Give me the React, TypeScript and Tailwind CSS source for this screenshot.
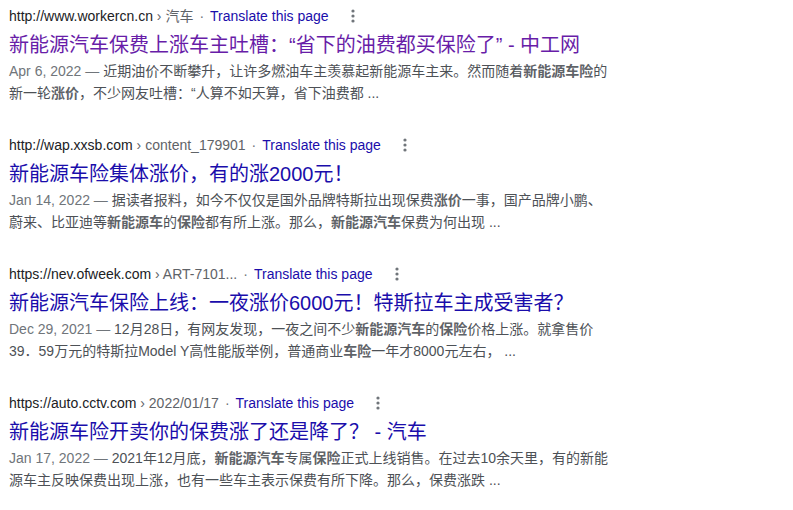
import React from "react";

const FONT = '"Liberation Sans", Arial, "Noto Sans CJK SC", sans-serif';

type Part = string | { b: string };

interface Result {
  url: string;
  crumb: string;
  title: string;
  visited?: boolean;
  date: string;
  lines: Part[][];
}

const results: Result[] = [
  {
    url: "http://www.workercn.cn",
    crumb: "汽车",
    title: "新能源汽车保费上涨车主吐槽：“省下的油费都买保险了” - 中工网",
    visited: true,
    date: "Apr 6, 2022",
    lines: [
      ["近期油价不断攀升，让许多燃油车主羡慕起新能源车主来。然而随着", { b: "新能源车险" }, "的"],
      ["新一轮", { b: "涨价" }, "，不少网友吐槽：“人算不如天算，省下油费都 ..."],
    ],
  },
  {
    url: "http://wap.xxsb.com",
    crumb: "content_179901",
    title: "新能源车险集体涨价，有的涨2000元！",
    date: "Jan 14, 2022",
    lines: [
      ["据读者报料，如今不仅仅是国外品牌特斯拉出现保费", { b: "涨价" }, "一事，国产品牌小鹏、"],
      ["蔚来、比亚迪等", { b: "新能源车" }, "的", { b: "保险" }, "都有所上涨。那么，", { b: "新能源汽车" }, "保费为何出现 ..."],
    ],
  },
  {
    url: "https://nev.ofweek.com",
    crumb: "ART-7101...",
    title: "新能源汽车保险上线：一夜涨价6000元！特斯拉车主成受害者？",
    date: "Dec 29, 2021",
    lines: [
      ["12月28日，有网友发现，一夜之间不少", { b: "新能源汽车" }, "的", { b: "保险" }, "价格上涨。就拿售价"],
      ["39．59万元的特斯拉Model Y高性能版举例，普通商业", { b: "车险" }, "一年才8000元左右，  ..."],
    ],
  },
  {
    url: "https://auto.cctv.com",
    crumb: "2022/01/17",
    title: "新能源车险开卖你的保费涨了还是降了？ - 汽车",
    date: "Jan 17, 2022",
    lines: [
      ["2021年12月底，", { b: "新能源汽车" }, "专属", { b: "保险" }, "正式上线销售。在过去10余天里，有的新能"],
      ["源车主反映保费出现上涨，也有一些车主表示保费有所下降。那么，保费涨跌 ..."],
    ],
  },
];

function Kebab() {
  return (
    <svg width="4" height="14" viewBox="0 0 4 14" className="ml-[22px]">
      <circle cx="2" cy="2" r="1.6" fill="#70757a" />
      <circle cx="2" cy="7" r="1.6" fill="#70757a" />
      <circle cx="2" cy="12" r="1.6" fill="#70757a" />
    </svg>
  );
}

function Line({ parts }: { parts: Part[] }) {
  return (
    <>
      {parts.map((p, i) =>
        typeof p === "string" ? (
          <span key={i}>{p}</span>
        ) : (
          <b key={i} className="font-bold text-[#5f6368]">
            {p.b}
          </b>
        )
      )}
    </>
  );
}

function ResultItem({ r }: { r: Result }) {
  return (
    <div className="flex flex-col">
      <div className="flex items-center h-5 text-[14px] leading-5 whitespace-nowrap">
        <span className="text-[#202124]">{r.url}</span>
        <span className="text-[#5f6368]">&nbsp;› {r.crumb}</span>
        <span className="text-[#70757a] px-[6px]">·</span>
        <span className="text-[#1a0dab]">Translate this page</span>
        <Kebab />
      </div>
      <div
        className={`mt-[6px] text-[20px] leading-[26px] whitespace-nowrap ${
          r.visited ? "text-[#681da8]" : "text-[#1a0dab]"
        }`}
      >
        {r.title}
      </div>
      <div className="mt-[2px] text-[14px] leading-[22px] text-[#4d5156] whitespace-nowrap">
        <div>
          <span className="text-[#70757a]">{r.date} — </span>
          <Line parts={r.lines[0]} />
        </div>
        <div>
          <Line parts={r.lines[1]} />
        </div>
      </div>
    </div>
  );
}

export default function App() {
  return (
    <div
      className="w-[793px] h-[510px] bg-white overflow-hidden pl-[9px] pt-[6px] flex flex-col gap-[31px]"
      style={{ fontFamily: FONT }}
    >
      {results.map((r, i) => (
        <ResultItem key={i} r={r} />
      ))}
    </div>
  );
}
